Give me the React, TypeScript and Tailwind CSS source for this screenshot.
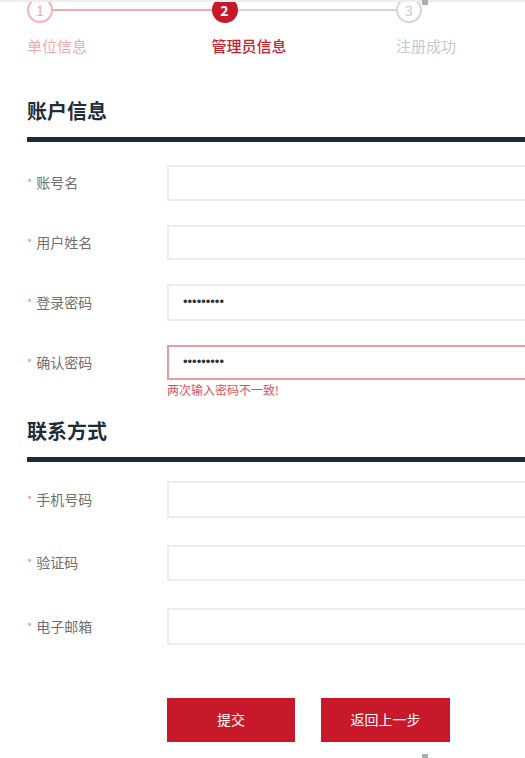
import React from 'react';

const font = '"Noto Sans CJK SC", "Noto Sans", sans-serif';

const steps = [
  { no: 1, label: '单位信息', state: 'done' },
  { no: 2, label: '管理员信息', state: 'active' },
  { no: 3, label: '注册成功', state: 'todo' },
];

function Stepper() {
  return (
    <div className="flex">
      {steps.map((s, i) => (
        <div key={s.no} className="w-[184.5px] shrink-0">
          <div className="flex items-center -mt-[3px]">
            <div
              className={
                s.state === 'active'
                  ? 'w-[26px] h-[26px] rounded-full bg-[#c8192a] text-white font-bold text-[14px] flex items-center justify-center shrink-0'
                  : s.state === 'done'
                  ? 'w-[26px] h-[26px] rounded-full border-2 border-[#f3b3b8] text-[#f0a5ab] text-[14px] flex items-center justify-center shrink-0'
                  : 'w-[26px] h-[26px] rounded-full border-2 border-[#d3d6dc] text-[#c3c7ce] text-[14px] flex items-center justify-center shrink-0'
              }
            >
              {s.no}
            </div>
            {i < steps.length - 1 && (
              <div
                className={
                  s.state === 'done'
                    ? 'flex-1 h-[2px] bg-[#f0a8ae]'
                    : 'flex-1 h-[2px] bg-[#d3d6dc]'
                }
              />
            )}
          </div>
          <div
            className={
              s.state === 'active'
                ? 'mt-[12px] text-[15px] text-[#c8202f] font-medium'
                : s.state === 'done'
                ? 'mt-[12px] text-[15px] text-[#f2a9ae]'
                : 'mt-[12px] text-[15px] text-[#c5c9d0]'
            }
          >
            {s.label}
          </div>
        </div>
      ))}
    </div>
  );
}

function SectionTitle({ title }: { title: string }) {
  return (
    <div>
      <h2 className="text-[20px] font-bold text-[#1f2d3a] leading-[24px]">{title}</h2>
      <div className="mt-[14px] h-[5px] bg-[#1c2b38] w-[600px]" />
    </div>
  );
}

function Field({
  label,
  value,
  error,
  height = 36,
}: {
  label: string;
  value?: string;
  error?: string;
  height?: number;
}) {
  return (
    <div>
      <div className="flex items-center">
        <div className="w-[140px] shrink-0 flex items-center text-[14px] text-[#6f6f6f]">
          <span className="text-[#f08c8c] text-[11px] mr-[4px]">*</span>
          {label}
        </div>
        <div
          className={
            error
              ? 'w-[400px] shrink-0 border-2 border-[#eb9a9f] flex items-center pl-[14px] bg-white'
              : 'w-[400px] shrink-0 border-2 border-[#ececec] flex items-center pl-[14px] bg-white'
          }
          style={{ height }}
        >
          {value && (
            <span className="text-[13px] text-[#333] font-['Liberation_Sans',sans-serif]">{value}</span>
          )}
        </div>
      </div>
      {error && <div className="ml-[140px] mt-[2px] text-[12px] text-[#e0505a] leading-[16px]">{error}</div>}
    </div>
  );
}

export default function App() {
  return (
    <div className="relative w-[525px] h-[758px] overflow-hidden bg-white" style={{ fontFamily: font }}>
      <div className="absolute top-0 left-0 w-full h-[2px] bg-[#eeeeee]" />
      <div className="absolute top-0 left-[422px] w-[6px] h-[5px] bg-[#a9adb5]" />
      <div className="absolute bottom-0 left-[422px] w-[6px] h-[4px] bg-[#a9adb5]" />

      <div className="pl-[27px]">
        <Stepper />

        <div className="mt-[41px]">
          <SectionTitle title="账户信息" />
        </div>

        <div className="mt-[23px] flex flex-col gap-[24px]">
          <Field label="账号名" />
          <Field label="用户姓名" height={35} />
          <Field label="登录密码" value="•••••••••" height={37} />
          <Field label="确认密码" value="•••••••••" error="两次输入密码不一致!" height={35} />
        </div>

        <div className="mt-[21px]">
          <SectionTitle title="联系方式" />
        </div>

        <div className="mt-[19px] flex flex-col gap-[27px]">
          <Field label="手机号码" height={37} />
          <Field label="验证码" height={36} />
          <Field label="电子邮箱" height={37} />
        </div>

        <div className="mt-[53px] ml-[140px] flex gap-[26px]">
          <button className="w-[128px] h-[44px] bg-[#c8192a] text-white text-[14px]">提交</button>
          <button className="w-[129px] h-[44px] bg-[#c8192a] text-white text-[14px]">返回上一步</button>
        </div>
      </div>
    </div>
  );
}
